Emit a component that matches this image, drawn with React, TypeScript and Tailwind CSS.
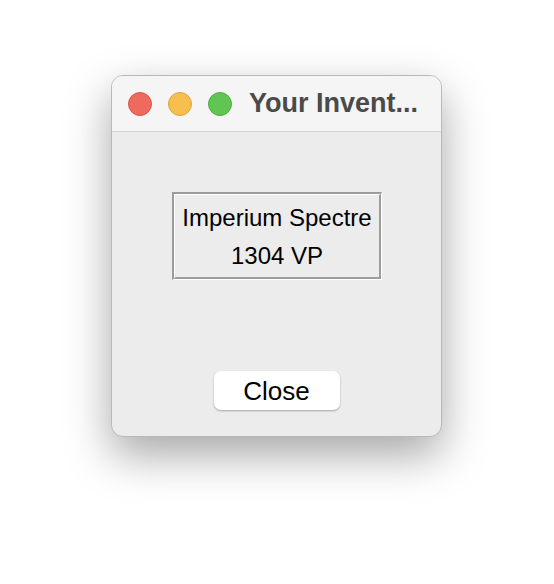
export default function App() {
  return (
    <div className="w-[554px] h-[584px] bg-white pt-[75px] font-['Liberation_Sans',Arial,sans-serif]">
      <div className="ml-[111px] w-[331px] h-[362px] rounded-[12px] bg-[#ececec] border border-[#b9b9b9] shadow-[0_18px_45px_rgba(0,0,0,0.35)] overflow-hidden flex flex-col">
        {/* title bar */}
        <div className="h-[56px] shrink-0 bg-[#f4f5f4] border-b border-[#d3d3d3] flex items-center pl-[16px]">
          <div className="flex items-center gap-[16px]">
            <span className="w-[24px] h-[24px] rounded-full bg-[#ee6a5f] border border-[#d6564b]" />
            <span className="w-[24px] h-[24px] rounded-full bg-[#f6bf4f] border border-[#dca43c]" />
            <span className="w-[24px] h-[24px] rounded-full bg-[#61c554] border border-[#4fac43]" />
          </div>
          <span className="ml-[17px] text-[27px] font-bold text-[#4a4a4a] leading-none">Your Invent...</span>
        </div>

        {/* body */}
        <div className="flex-1 flex flex-col items-center">
          <div className="mt-[60px] ml-[1px] w-[210px] h-[88px] border-t-2 border-l-2 border-b border-r border-t-[#9c9c9c] border-l-[#9c9c9c] border-b-white border-r-white">
            <div className="w-full h-full border-t border-l border-b-2 border-r-2 border-t-white border-l-white border-b-[#9c9c9c] border-r-[#9c9c9c] flex flex-col items-center justify-center gap-[14px] pt-[1px] text-black text-[24px] leading-none">
              <span>Imperium Spectre</span>
              <span>1304 VP</span>
            </div>
          </div>

          <button className="mt-[91px] w-[126px] h-[39px] rounded-[7px] bg-white shadow-[0_1px_2px_rgba(0,0,0,0.3)] text-[26px] text-black leading-none">
            Close
          </button>
        </div>
      </div>
    </div>
  );
}
